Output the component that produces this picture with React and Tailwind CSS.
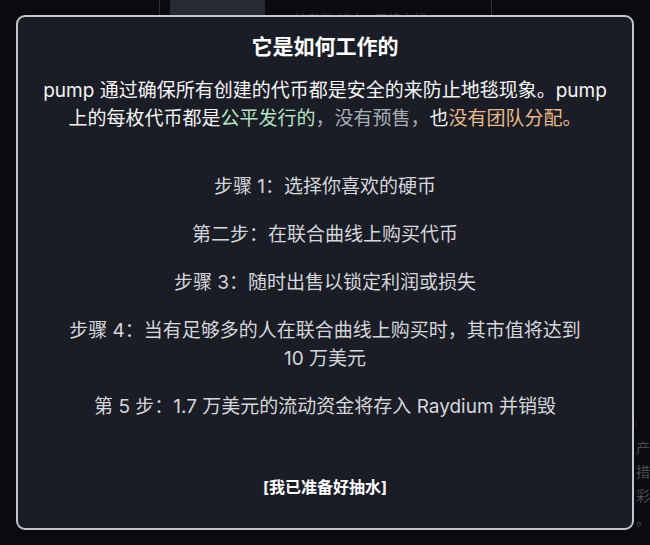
export default function App() {
    const steps = [
        '步骤 1：选择你喜欢的硬币',
        '第二步：在联合曲线上购买代币',
        '步骤 3：随时出售以锁定利润或损失',
        null,
        '第 5 步：1.7 万美元的流动资金将存入 Raydium 并销毁',
    ];

    return (
        <div
            className="relative h-[545px] w-full overflow-hidden bg-[#0a0b0f]"
            style={{ fontFamily: 'Inter, "Noto Sans CJK SC", sans-serif' }}
        >
            {/* page behind the dialog */}
            <div className="flex h-full">
                <div className="w-[159px] shrink-0" />
                <div className="h-[300px] w-[333px] shrink-0 border-x border-[#2e3036] px-[10px]">
                    <div className="flex gap-[30px]">
                        <div className="h-[120px] w-[95px] bg-[#262a33]" />
                        <div className="pt-[10px] text-[13px] text-[#3a3d45]">流动性 锁定 · 即将上线</div>
                    </div>
                </div>
                <div className="flex-1" />
                <div className="w-[14px] shrink-0 overflow-hidden pt-[412px] text-[14px] leading-[24px] text-[#4a4d55]">
                    <div className="-ml-[2px] whitespace-nowrap">·</div>
                    <div className="whitespace-nowrap">产称</div>
                    <div className="whitespace-nowrap">措施</div>
                    <div className="whitespace-nowrap">彩码</div>
                    <div className="whitespace-nowrap">。</div>
                </div>
            </div>

            {/* dialog */}
            <div className="absolute left-[16px] top-[15px] flex h-[515px] w-[618px] flex-col items-center rounded-[9px] border-2 border-[#c3c5cb] bg-[#1b1d26] px-[20px] pt-[15px] text-center">
                <h2 className="text-[21px] font-bold leading-[30px] text-white">它是如何工作的</h2>
                <p className="mt-[15px] text-[19px] leading-[28px] text-[#f4f4f5]">
                    pump 通过确保所有创建的代币都是安全的来防止地毯现象。pump
                    <br />
                    上的每枚代币都是<span className="text-[#b4e2c4]">公平发行的</span>
                    <span className="text-[#a9adb6]">，没有预售，</span>也<span className="text-[#e9b98b]">没有团队分配。</span>
                </p>

                <div className="mt-[40px] flex flex-col gap-[20px] text-[19px] leading-[28px] text-[#d4d6db]">
                    {steps.map((s, i) =>
                        s ? (
                            <p key={i}>{s}</p>
                        ) : (
                            <p key={i}>
                                步骤 4：当有足够多的人在联合曲线上购买时，其市值将达到
                                <br />
                                10 万美元
                            </p>
                        )
                    )}
                </div>

                <button className="mt-[54px] text-[16px] font-bold leading-[24px] text-white">[我已准备好抽水]</button>
            </div>
        </div>
    );
}
